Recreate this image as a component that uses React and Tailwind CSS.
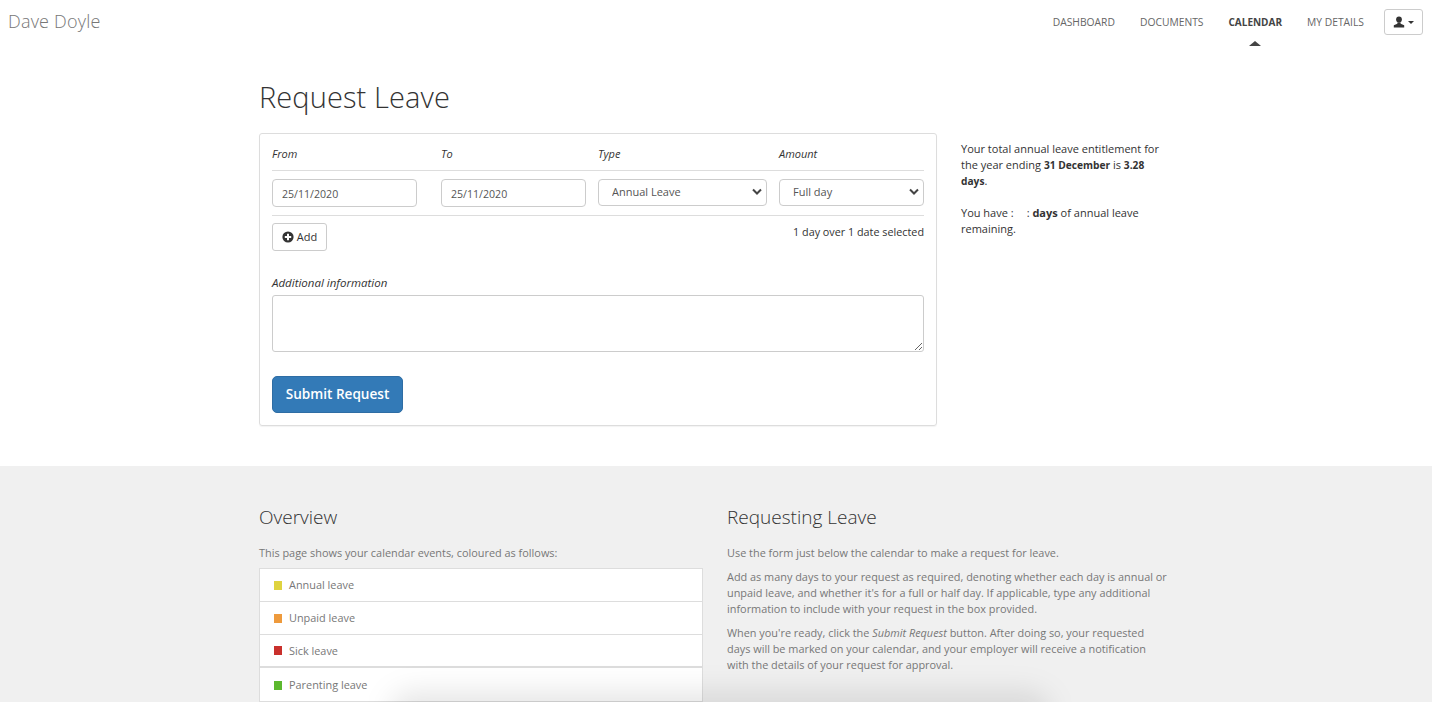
import { useState } from 'react'

const font = { fontFamily: '"Open Sans", "Noto Sans", sans-serif' }

const navItems = ['Dashboard', 'Documents', 'Calendar', 'My Details']

const legend = [
  { label: 'Annual leave', color: 'bg-[#dfd33f]', row: 'h-[33px] border-b' },
  { label: 'Unpaid leave', color: 'bg-[#ee9a3c]', row: 'h-[33px] border-b' },
  { label: 'Sick leave', color: 'bg-[#c9302c]', row: 'h-[33px] border-b-2' },
  { label: 'Parenting leave', color: 'bg-[#5cb82e]', row: 'h-[34px] border-b pt-[1px]' },
]

function UserIcon() {
  return (
    <svg width="12" height="12" viewBox="0 0 12 12" fill="#333">
      <circle cx="6" cy="3.4" r="2.9" />
      <path d="M4.6 6.2h2.8l.3 1.5 3.5 1.5V11.4H.8V9.2l3.5-1.5z" />
    </svg>
  )
}

function PlusIcon() {
  return (
    <svg width="12" height="12" viewBox="0 0 12 12">
      <circle cx="6" cy="6" r="5.6" fill="#333" />
      <path d="M5 2.8h2V5h2.2v2H7v2.2H5V7H2.8V5H5z" fill="#fff" />
    </svg>
  )
}

function Select({ options, width, pad }) {
  const [value, setValue] = useState(options[0])
  return (
    <div className={`relative h-[27px] ${width}`}>
      <select
        value={value}
        onChange={(e) => setValue(e.target.value)}
        className={`h-full w-full appearance-none rounded-[4px] border border-[#ccc] bg-white pb-[2px] text-[11px] text-[#555] ${pad}`}
      >
        {options.map((o) => (
          <option key={o}>{o}</option>
        ))}
      </select>
      <svg
        className="pointer-events-none absolute right-[5px] top-[9px]"
        width="10"
        height="8"
        viewBox="0 0 10 8"
        fill="none"
        stroke="#444"
        strokeWidth="2"
      >
        <path d="M1 1.5l4 4 4-4" />
      </svg>
    </div>
  )
}

function DateInput() {
  return (
    <input
      type="text"
      defaultValue="25/11/2020"
      className="h-[28px] w-[145px] rounded-[4px] border border-[#ccc] bg-white px-[9px] pt-[1px] text-[10.6px] text-[#555]"
    />
  )
}

export default function App() {
  return (
    <div style={font} className="relative h-[702px] overflow-hidden bg-white text-[11px] leading-[16px] text-[#333]">
      <header className="flex h-[44px] items-start justify-between pl-2 pr-[9px]">
        <span className="mt-[8px] text-[18px] font-light leading-[26px] tracking-[0.2px] text-[#777]">Dave Doyle</span>
        <div className="flex items-start">
          <nav className="mr-5 flex gap-[25px] pt-[14px]">
            {navItems.map((item) => (
              <a
                key={item}
                className={`relative uppercase leading-[16px] ${item === 'Calendar' ? 'text-[10px] font-bold text-[#444]' : 'text-[10.3px] text-[#666]'}`}
              >
                {item}
                {item === 'Calendar' && (
                  <span className="absolute left-1/2 top-[27px] -ml-[6px] border-x-[6px] border-b-[5px] border-x-transparent border-b-[#444]" />
                )}
              </a>
            ))}
          </nav>
          <button className="mt-[9px] flex h-[26px] w-[39px] items-center justify-center gap-[3px] rounded-[3px] border border-[#ccc] bg-white">
            <UserIcon />
            <span className="border-x-[3px] border-t-[3px] border-x-transparent border-t-[#333]" />
          </button>
        </div>
      </header>

      <main className="ml-[259px] h-[422px] w-[914px]">
        <h1 className="pt-[36px] text-[29px] font-light leading-[34px] tracking-[0.1px] text-[#333]">Request Leave</h1>
        <div className="mt-[19px] flex">
          <form className="h-[293px] w-[678px] rounded-[3px] border border-[#ddd] px-3 pt-3 shadow-[0_1px_1px_rgba(0,0,0,0.05)]">
            <div className="grid h-[25px] grid-cols-[169px_157px_181px_145px] border-b border-[#ddd] text-[11px] italic">
              <span>From</span>
              <span>To</span>
              <span>Type</span>
              <span>Amount</span>
            </div>
            <div className="grid h-[45px] grid-cols-[169px_157px_181px_145px] items-start border-b border-[#ddd] pt-[8px]">
              <DateInput />
              <DateInput />
              <Select options={['Annual Leave']} width="w-[169px]" pad="pl-[13px]" />
              <Select options={['Full day']} width="w-[145px]" pad="pl-[13px]" />
            </div>
            <div className="flex items-start justify-between pt-[7px]">
              <button type="button" className="flex h-[28px] w-[55px] items-center justify-center gap-[3px] rounded-[3px] border border-[#ccc] bg-white text-[11px]">
                <PlusIcon />
                Add
              </button>
              <span className="mt-[1px] text-[10.8px]">1 day over 1 date selected</span>
            </div>
            <label className="mt-6 block text-[11.5px] italic">Additional information</label>
            <textarea className="mt-[4px] block h-[57px] w-[652px] rounded-[3px] border border-[#ccc] bg-white" />
            <button type="button" className="mt-6 h-[37px] w-[131px] rounded-[5px] border border-[#2e6da4] bg-[#337ab7] pb-[2px] text-[13.6px] font-semibold text-white">
              Submit Request
            </button>
          </form>
          <aside className="ml-6 w-[210px] pt-[8px] text-[11px]">
            <p>
              Your total annual leave entitlement for the year ending <b className="text-[10.2px]">31 December</b> is <b className="text-[10.2px]">3.28 days</b>.
            </p>
            <p className="mt-4">
              You have :<span className="inline-block w-[13px]" />
              : <b>days</b> of annual leave remaining.
            </p>
          </aside>
        </div>
      </main>

      <section className="grid h-[236px] grid-cols-[444px_442px] gap-x-6 bg-[#f0f0f0] pl-[259px] pt-[40px] text-[10.9px] text-[#777]">
        <div>
          <h2 className="text-[19px] font-light leading-[22px] text-[#333]">Overview</h2>
          <p className="mt-[17px]">This page shows your calendar events, coloured as follows:</p>
          <ul className="mt-[7px] border-t border-[#ddd] bg-white">
            {legend.map((item) => (
              <li key={item.label} className={`flex items-center gap-[7px] border-x border-[#ddd] pl-[14px] ${item.row}`}>
                <span className={`h-[9px] w-[8px] ${item.color}`} />
                {item.label}
              </li>
            ))}
          </ul>
        </div>
        <div>
          <h2 className="text-[19px] font-light leading-[22px] text-[#333]">Requesting Leave</h2>
          <p className="mt-[17px]">Use the form just below the calendar to make a request for leave.</p>
          <p className="mt-[8px]">
            Add as many days to your request as required, denoting whether each day is annual or unpaid leave, and whether it's for a full or half day. If applicable, type any additional information to include with your request in the box provided.
          </p>
          <p className="mt-[8px]">
            When you're ready, click the <i>Submit Request</i> button. After doing so, your requested days will be marked on your calendar, and your employer will receive a notification with the details of your request for approval.
          </p>
        </div>
      </section>

      <div className="pointer-events-none absolute bottom-[-34px] left-[390px] h-[44px] w-[660px] rounded-full bg-black/10 blur-[14px]" />
    </div>
  )
}
